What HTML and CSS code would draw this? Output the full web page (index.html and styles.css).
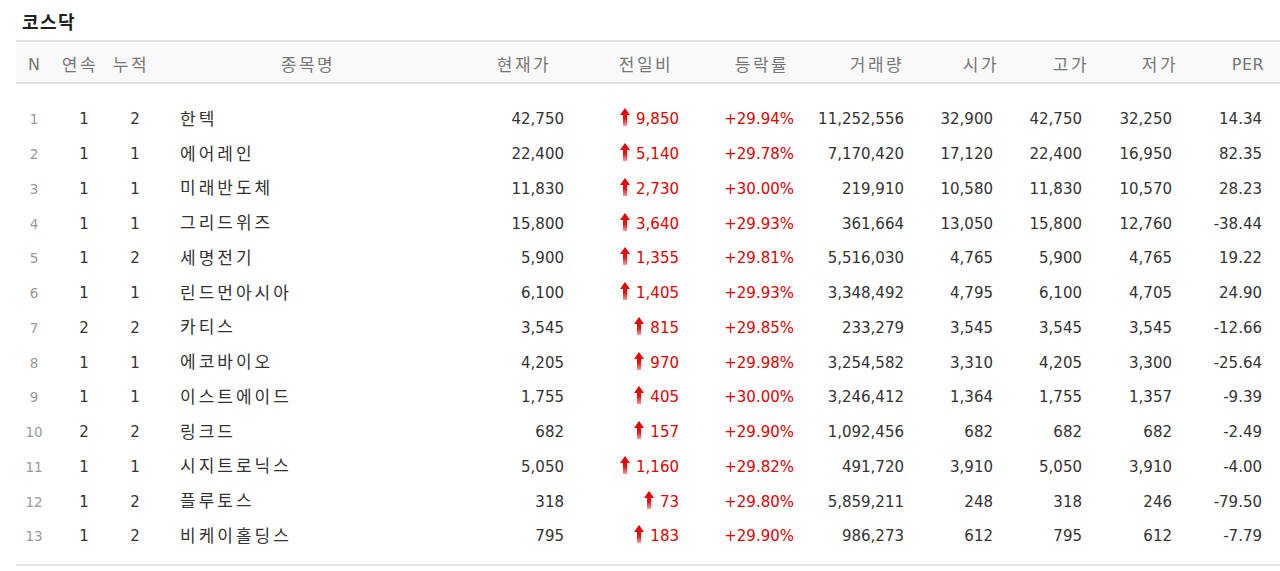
FILE: index.html
```html
<!DOCTYPE html>
<html lang="ko">
<head>
<meta charset="utf-8">
<title>코스닥</title>
<link rel="stylesheet" href="styles.css">
</head>
<body>
<svg width="0" height="0" class="defs">
  <defs>
    <linearGradient id="ag" x1="0" y1="0" x2="0" y2="1">
      <stop offset="0" stop-color="#e00000"/>
      <stop offset="0.6" stop-color="#f01010"/>
      <stop offset="1" stop-color="#ff9a9a"/>
    </linearGradient>
    <symbol id="up" viewBox="0 0 10 18">
      <path d="M5 0 L10 7 L7 7 L7 18 L3 18 L3 7 L0 7 Z" fill="url(#ag)"/>
    </symbol>
  </defs>
</svg>
<div class="wrap">
  <h2 class="title">코스닥</h2>
  <div class="table">
    <div class="row head">
      <div class="c n">N</div>
      <div class="c">연속</div>
      <div class="c">누적</div>
      <div class="c">종목명</div>
      <div class="c">현재가</div>
      <div class="c">전일비</div>
      <div class="c">등락률</div>
      <div class="c">거래량</div>
      <div class="c">시가</div>
      <div class="c">고가</div>
      <div class="c">저가</div>
      <div class="c per">PER</div>
    </div>
    <div class="body" id="body"></div>
  </div>
</div>
<script src="app.js"></script>
</body>
</html>
```
FILE: app.js
```js
const rows = [
  [1,1,2,"한텍","42,750","9,850","+29.94%","11,252,556","32,900","42,750","32,250","14.34"],
  [2,1,1,"에어레인","22,400","5,140","+29.78%","7,170,420","17,120","22,400","16,950","82.35"],
  [3,1,1,"미래반도체","11,830","2,730","+30.00%","219,910","10,580","11,830","10,570","28.23"],
  [4,1,1,"그리드위즈","15,800","3,640","+29.93%","361,664","13,050","15,800","12,760","-38.44"],
  [5,1,2,"세명전기","5,900","1,355","+29.81%","5,516,030","4,765","5,900","4,765","19.22"],
  [6,1,1,"린드먼아시아","6,100","1,405","+29.93%","3,348,492","4,795","6,100","4,705","24.90"],
  [7,2,2,"카티스","3,545","815","+29.85%","233,279","3,545","3,545","3,545","-12.66"],
  [8,1,1,"에코바이오","4,205","970","+29.98%","3,254,582","3,310","4,205","3,300","-25.64"],
  [9,1,1,"이스트에이드","1,755","405","+30.00%","3,246,412","1,364","1,755","1,357","-9.39"],
  [10,2,2,"링크드","682","157","+29.90%","1,092,456","682","682","682","-2.49"],
  [11,1,1,"시지트로닉스","5,050","1,160","+29.82%","491,720","3,910","5,050","3,910","-4.00"],
  [12,1,2,"플루토스","318","73","+29.80%","5,859,211","248","318","246","-79.50"],
  [13,1,2,"비케이홀딩스","795","183","+29.90%","986,273","612","795","612","-7.79"]
];
const body = document.getElementById("body");
body.innerHTML = rows.map(r => `
  <div class="row">
    <div class="d n">${r[0]}</div>
    <div class="d cnt">${r[1]}</div>
    <div class="d cnt">${r[2]}</div>
    <div class="d name">${r[3]}</div>
    <div class="d num p-cur">${r[4]}</div>
    <div class="d num red p-diff"><svg class="arrow"><use href="#up"/></svg>${r[5]}</div>
    <div class="d num red p-rate">${r[6]}</div>
    <div class="d num p-vol">${r[7]}</div>
    <div class="d num p-open">${r[8]}</div>
    <div class="d num p-high">${r[9]}</div>
    <div class="d num p-low">${r[10]}</div>
    <div class="d num p-per">${r[11]}</div>
  </div>`).join("");
```
FILE: styles.css
```css
html, body {
  margin: 0;
  padding: 0;
  background: #fff;
}
.defs { position: absolute; }
.wrap {
  padding-left: 16px;
  font-family: "DejaVu Sans", "Noto Sans CJK KR", sans-serif;
  color: #333;
}
.title {
  margin: 0;
  height: 40px;
  box-sizing: border-box;
  padding: 9px 0 0 6px;
  font-family: "Noto Sans CJK KR", sans-serif;
  font-size: 18px;
  font-weight: bold;
  line-height: 24px;
  letter-spacing: 1.5px;
  color: #222;
}
.table {
  width: 1264px;
  border-bottom: 2px solid #e4e4e4;
}
.row {
  display: grid;
  grid-template-columns: 36px 54px 48px 306px 126px 118px 114px 116px 92px 88px 90px 76px;
  align-items: center;
}
.head {
  height: 44px;
  box-sizing: border-box;
  background: #f9f9f9;
  border-top: 2px solid #e2e2e2;
  border-bottom: 2px solid #e2e2e2;
  color: #777;
  font-family: "Noto Sans CJK KR", sans-serif;
  font-size: 17px;
  letter-spacing: 2.5px;
}
.head .c {
  text-align: center;
  line-height: 40px;
  padding-top: 1px;
  padding-left: 2px;
}
.head .n { font-family: "DejaVu Sans", sans-serif; font-size: 16px; letter-spacing: 0; padding-left: 0; padding-top: 3px; }
.head .per { font-family: "DejaVu Sans", sans-serif; font-size: 16px; letter-spacing: 0.5px; padding-left: 12px; padding-top: 3px; }
.body {
  padding: 18px 0 10px;
}
.body .row {
  height: 34.75px;
  font-size: 15px;
}
.d { white-space: nowrap; }
.d.n {
  text-align: center;
  font-size: 13.5px;
  color: #999;
}
.d.cnt { text-align: center; padding-left: 10px; }
.d.name {
  padding-left: 26px;
  padding-bottom: 4px;
  font-family: "Noto Sans CJK KR", sans-serif;
  font-size: 17px;
  letter-spacing: 3px;
}
.d.num {
  text-align: right;
  display: flex;
  justify-content: flex-end;
  align-items: center;
}
.red { color: #e60000; }
.arrow {
  width: 10px;
  height: 18px;
  margin-right: 6px;
  margin-top: -4px;
}
.p-cur { padding-right: 22px; }
.p-diff { padding-right: 25px; }
.p-rate { padding-right: 24px; }
.p-vol { padding-right: 30px; }
.p-open { padding-right: 33px; }
.p-high { padding-right: 32px; }
.p-low { padding-right: 32px; }
.p-per { padding-right: 18px; }
```
